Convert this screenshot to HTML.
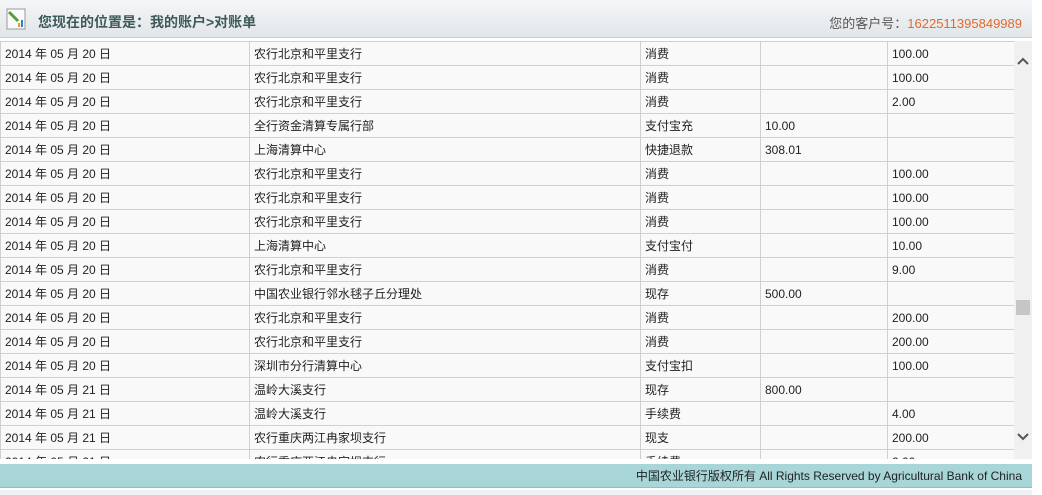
<!DOCTYPE html>
<html><head><meta charset="utf-8"><style>
*{margin:0;padding:0;box-sizing:border-box}
body{width:1042px;height:495px;background:#fff;font-family:"Liberation Sans","Noto Sans CJK SC",sans-serif;font-size:12px;color:#222;position:relative;overflow:hidden}
#hd{position:absolute;left:0;top:0;width:1032px;height:38px;background:linear-gradient(#f4f6f8,#e2e6e9);border-bottom:1px solid #c8ccd0}
#hd .t{position:absolute;left:38px;top:12px;font-size:14px;font-weight:bold;color:#3d5a5a}
#hd .r{position:absolute;right:10px;top:13px;font-size:13px;color:#555}
#hd .r span{color:#e06a2c}
#ic{position:absolute;left:6px;top:8px;width:20px;height:22px}
#wrap{position:absolute;left:0;top:41px;width:1032px;height:418px;overflow:hidden;background:#f9f9f9}
table{border-collapse:collapse;position:absolute;left:0;top:0}
td{height:24px;border:1px solid #d0d0d0;padding:0 4px;vertical-align:middle;white-space:nowrap;background:#f9f9f9}
#sb{position:absolute;left:1014px;top:0;width:18px;height:418px;background:#f0f0f0}
#th{position:absolute;left:2px;top:259px;width:14px;height:15px;background:#c6c6c6}
#ft{position:absolute;left:0;top:464px;width:1032px;height:24px;background:#a8d5d8;border-bottom:1px solid #8fbfc3;text-align:right;padding-right:10px;line-height:24px;font-size:12px;color:#222}
#bt{position:absolute;left:0;top:490px;width:1032px;height:5px;background:#eef0f3}
</style></head><body>
<div id="hd">
<svg id="ic" viewBox="0 0 20 22"><rect x="1" y="1" width="18" height="20" fill="#fafafa" stroke="#999"/><path d="M3 4l9 9" stroke="#5a9c3a" stroke-width="3"/><rect x="12" y="15" width="2" height="4" fill="#d0a030"/><rect x="15" y="12" width="2" height="7" fill="#3a7ac0"/></svg>
<div class="t">您现在的位置是：我的账户>对账单</div>
<div class="r">您的客户号：<span>1622511395849989</span></div>
</div>
<div id="wrap">
<table>
<colgroup><col style="width:249px"><col style="width:391px"><col style="width:120px"><col style="width:127px"><col style="width:127px"></colgroup>
<tr><td>2014 年 05 月 20 日</td><td>农行北京和平里支行</td><td>消费</td><td></td><td>100.00</td></tr>
<tr><td>2014 年 05 月 20 日</td><td>农行北京和平里支行</td><td>消费</td><td></td><td>100.00</td></tr>
<tr><td>2014 年 05 月 20 日</td><td>农行北京和平里支行</td><td>消费</td><td></td><td>2.00</td></tr>
<tr><td>2014 年 05 月 20 日</td><td>全行资金清算专属行部</td><td>支付宝充</td><td>10.00</td><td></td></tr>
<tr><td>2014 年 05 月 20 日</td><td>上海清算中心</td><td>快捷退款</td><td>308.01</td><td></td></tr>
<tr><td>2014 年 05 月 20 日</td><td>农行北京和平里支行</td><td>消费</td><td></td><td>100.00</td></tr>
<tr><td>2014 年 05 月 20 日</td><td>农行北京和平里支行</td><td>消费</td><td></td><td>100.00</td></tr>
<tr><td>2014 年 05 月 20 日</td><td>农行北京和平里支行</td><td>消费</td><td></td><td>100.00</td></tr>
<tr><td>2014 年 05 月 20 日</td><td>上海清算中心</td><td>支付宝付</td><td></td><td>10.00</td></tr>
<tr><td>2014 年 05 月 20 日</td><td>农行北京和平里支行</td><td>消费</td><td></td><td>9.00</td></tr>
<tr><td>2014 年 05 月 20 日</td><td>中国农业银行邻水毬子丘分理处</td><td>现存</td><td>500.00</td><td></td></tr>
<tr><td>2014 年 05 月 20 日</td><td>农行北京和平里支行</td><td>消费</td><td></td><td>200.00</td></tr>
<tr><td>2014 年 05 月 20 日</td><td>农行北京和平里支行</td><td>消费</td><td></td><td>200.00</td></tr>
<tr><td>2014 年 05 月 20 日</td><td>深圳市分行清算中心</td><td>支付宝扣</td><td></td><td>100.00</td></tr>
<tr><td>2014 年 05 月 21 日</td><td>温岭大溪支行</td><td>现存</td><td>800.00</td><td></td></tr>
<tr><td>2014 年 05 月 21 日</td><td>温岭大溪支行</td><td>手续费</td><td></td><td>4.00</td></tr>
<tr><td>2014 年 05 月 21 日</td><td>农行重庆两江冉家坝支行</td><td>现支</td><td></td><td>200.00</td></tr>
<tr><td>2014 年 05 月 21 日</td><td>农行重庆两江冉家坝支行</td><td>手续费</td><td></td><td>2.00</td></tr>
</table>
<div id="sb">
<svg style="position:absolute;left:3px;top:16px" width="12" height="8" viewBox="0 0 12 8"><path d="M1 7l5-5 5 5" fill="none" stroke="#555" stroke-width="2"/></svg>
<div id="th"></div>
<svg style="position:absolute;left:3px;top:392px" width="12" height="8" viewBox="0 0 12 8"><path d="M1 1l5 5 5-5" fill="none" stroke="#555" stroke-width="2"/></svg>
</div>
</div>
<div id="ft">中国农业银行版权所有 All Rights Reserved by Agricultural Bank of China</div>
<div id="bt"></div>
</body></html>
